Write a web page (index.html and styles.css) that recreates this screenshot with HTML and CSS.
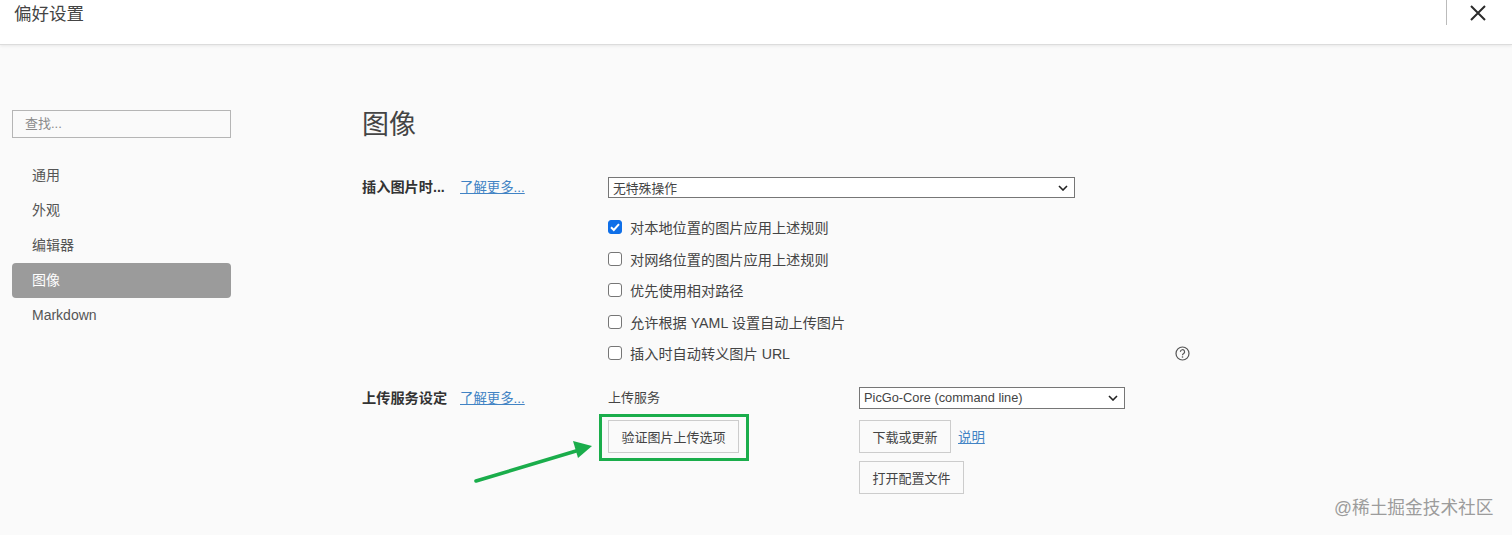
FILE: index.html
```html
<!DOCTYPE html>
<html lang="zh-CN">
<head>
<meta charset="utf-8">
<title>偏好设置</title>
<link rel="stylesheet" href="styles.css">
</head>
<body>
<div class="app">
  <header class="topbar">
    <span class="topbar-title">偏好设置</span>
    <div class="topbar-close">
      <svg width="16" height="16" viewBox="0 0 16 16"><path d="M1 1L15 15M15 1L1 15" stroke="#2b2b2b" stroke-width="2" fill="none"/></svg>
    </div>
  </header>
  <div class="body">
    <aside class="sidebar">
      <div class="search">查找...</div>
      <nav class="nav">
        <div class="nav-item">通用</div>
        <div class="nav-item">外观</div>
        <div class="nav-item">编辑器</div>
        <div class="nav-item active">图像</div>
        <div class="nav-item">Markdown</div>
      </nav>
    </aside>
    <main class="main">
      <h1 class="heading">图像</h1>
      <section class="section insert">
        <div class="section-label"><b>插入图片时...</b><a class="link">了解更多...</a></div>
        <div class="section-body">
          <div class="select wide"><span>无特殊操作</span><svg class="chev" width="10" height="6" viewBox="0 0 10 6"><path d="M1 1L5 5L9 1" stroke="#222" stroke-width="1.6" fill="none"/></svg></div>
          <div class="checks">
            <div class="check"><span class="box on"><svg width="14" height="14" viewBox="0 0 14 14"><path d="M3 7.2L5.8 10L11 4.2" stroke="#fff" stroke-width="2" fill="none"/></svg></span>对本地位置的图片应用上述规则</div>
            <div class="check"><span class="box"></span>对网络位置的图片应用上述规则</div>
            <div class="check"><span class="box"></span>优先使用相对路径</div>
            <div class="check"><span class="box"></span>允许根据 YAML 设置自动上传图片</div>
            <div class="check"><span class="box"></span>插入时自动转义图片 URL<svg class="help" width="15" height="15" viewBox="0 0 15 15"><circle cx="7.5" cy="7.5" r="6.5" stroke="#555" stroke-width="1.2" fill="none"/><path d="M5.4 5.9A2.1 2.1 0 1 1 8.4 7.7C7.7 8.1 7.5 8.4 7.5 9.2" stroke="#555" stroke-width="1.2" fill="none"/><circle cx="7.5" cy="11" r=".8" fill="#555"/></svg></div>
          </div>
        </div>
      </section>
      <section class="section upload">
        <div class="section-label"><b>上传服务设定</b><a class="link">了解更多...</a></div>
        <div class="upload-grid">
          <div class="upload-left">
            <div class="upload-name">上传服务</div>
            <button class="btn verify">验证图片上传选项</button>
          </div>
          <div class="upload-right">
            <div class="select narrow"><span>PicGo-Core (command line)</span><svg class="chev" width="10" height="6" viewBox="0 0 10 6"><path d="M1 1L5 5L9 1" stroke="#222" stroke-width="1.6" fill="none"/></svg></div>
            <div class="btn-row"><button class="btn">下载或更新</button><a class="link small">说明</a></div>
            <button class="btn">打开配置文件</button>
          </div>
        </div>
      </section>
    </main>
  </div>
  <div class="annot-box"></div>
  <svg class="annot-arrow" width="130" height="50" viewBox="0 0 130 50"><path d="M4 43L104 13" stroke="#1aad4b" stroke-width="3.6" stroke-linecap="round" fill="none"/><path d="M120 8L101 3L106 20Z" fill="#1aad4b"/></svg>
  <div class="watermark">@稀土掘金技术社区</div>
</div>
</body>
</html>
```
FILE: styles.css
```css
* { box-sizing: border-box; }
html, body { margin: 0; padding: 0; height: 100%; overflow: hidden; }
body { font-family: "Liberation Sans", "Noto Sans CJK SC", sans-serif; font-size: 14px; color: #444; background: #fafafa; }
.app { position: relative; width: 1512px; height: 535px; overflow: hidden; }

.topbar { height: 45px; background: #fff; border-bottom: 1px solid #dcdcdc; box-shadow: 0 1px 3px rgba(0,0,0,.08); display: flex; justify-content: space-between; }
.topbar-title { font-size: 17.5px; line-height: 28px; margin-left: 14px; color: #444; }
.topbar-close { width: 66px; height: 25px; border-left: 1px solid #bbb; display: flex; justify-content: center; padding: 5px 4px 0 0; }

.body { display: flex; }
.sidebar { width: 219px; margin: 65px 0 0 12px; flex: none; }
.search { height: 28px; border: 1px solid #b5b5b5; background: #fafafa; color: #8a8a8a; font-size: 13px; line-height: 25px; padding-left: 12px; }
.nav { margin-top: 20px; }
.nav-item { height: 35px; line-height: 34px; padding-left: 20px; color: #555; border-radius: 4px; }
.nav-item.active { background: #9b9b9b; color: #fff; }

.main { margin: 0 0 0 131px; flex: none; width: 840px; }
.heading { font-size: 27px; font-weight: 400; line-height: 40px; margin: 60px 0 0; color: #444; }
.section { display: flex; }
.section-label { width: 246px; flex: none; display: flex; line-height: 20px; }
.section-label b { width: 98px; font-weight: 700; color: #333; font-size: 14.2px; white-space: nowrap; }
.link { color: #4183c4; text-decoration: underline; font-size: 13.4px; }
.section-label .link { margin-top: 1px; }
.insert { margin-top: 32px; }
.section-body { flex: 1; }

.select { height: 21px; border: 1px solid #767676; background: #fff; display: flex; align-items: center; justify-content: space-between; padding: 0 6px 0 4px; font-size: 12.8px; color: #444; }
.select span { margin-bottom: 1px; }
.select.wide { width: 467px; height: 21px; }
.select.narrow { width: 266px; height: 22px; margin-top: -1px; }

.checks { margin-top: 13.5px; position: relative; }
.check { height: 31.5px; display: flex; align-items: center; color: #444; font-size: 14.2px; white-space: nowrap; }
.box { width: 14px; height: 14px; border: 1px solid #767676; border-radius: 3px; background: #fff; margin-right: 8px; flex: none; display: flex; }
.box.on { background: #0f6fe8; border-color: #0f6fe8; }
.box.on svg { margin: -1px; }
.help { position: absolute; left: 567px; top: 134px; }

.upload { margin-top: 18.5px; }
.upload-grid { display: flex; }
.upload-left { width: 251px; flex: none; }
.upload-name { line-height: 20px; font-size: 13px; color: #444; }
.btn { font-family: inherit; font-size: 13px; color: #444; background: #fafafa; border: 1px solid #ccc; height: 33px; padding: 0 12.5px; display: block; white-space: nowrap; }
.verify { margin-top: 12px; }
.btn-row { display: flex; align-items: center; gap: 7px; margin: 11px 0 8px; }
.link.small { font-size: 13.4px; }

.annot-box { position: absolute; left: 599px; top: 414px; width: 150px; height: 47px; border: 3px solid #1aad4b; }
.annot-arrow { position: absolute; left: 472px; top: 438px; }
.watermark { position: absolute; left: 1334px; top: 495px; font-size: 17.7px; line-height: 26px; color: #9c9c9c; white-space: nowrap; }
```
